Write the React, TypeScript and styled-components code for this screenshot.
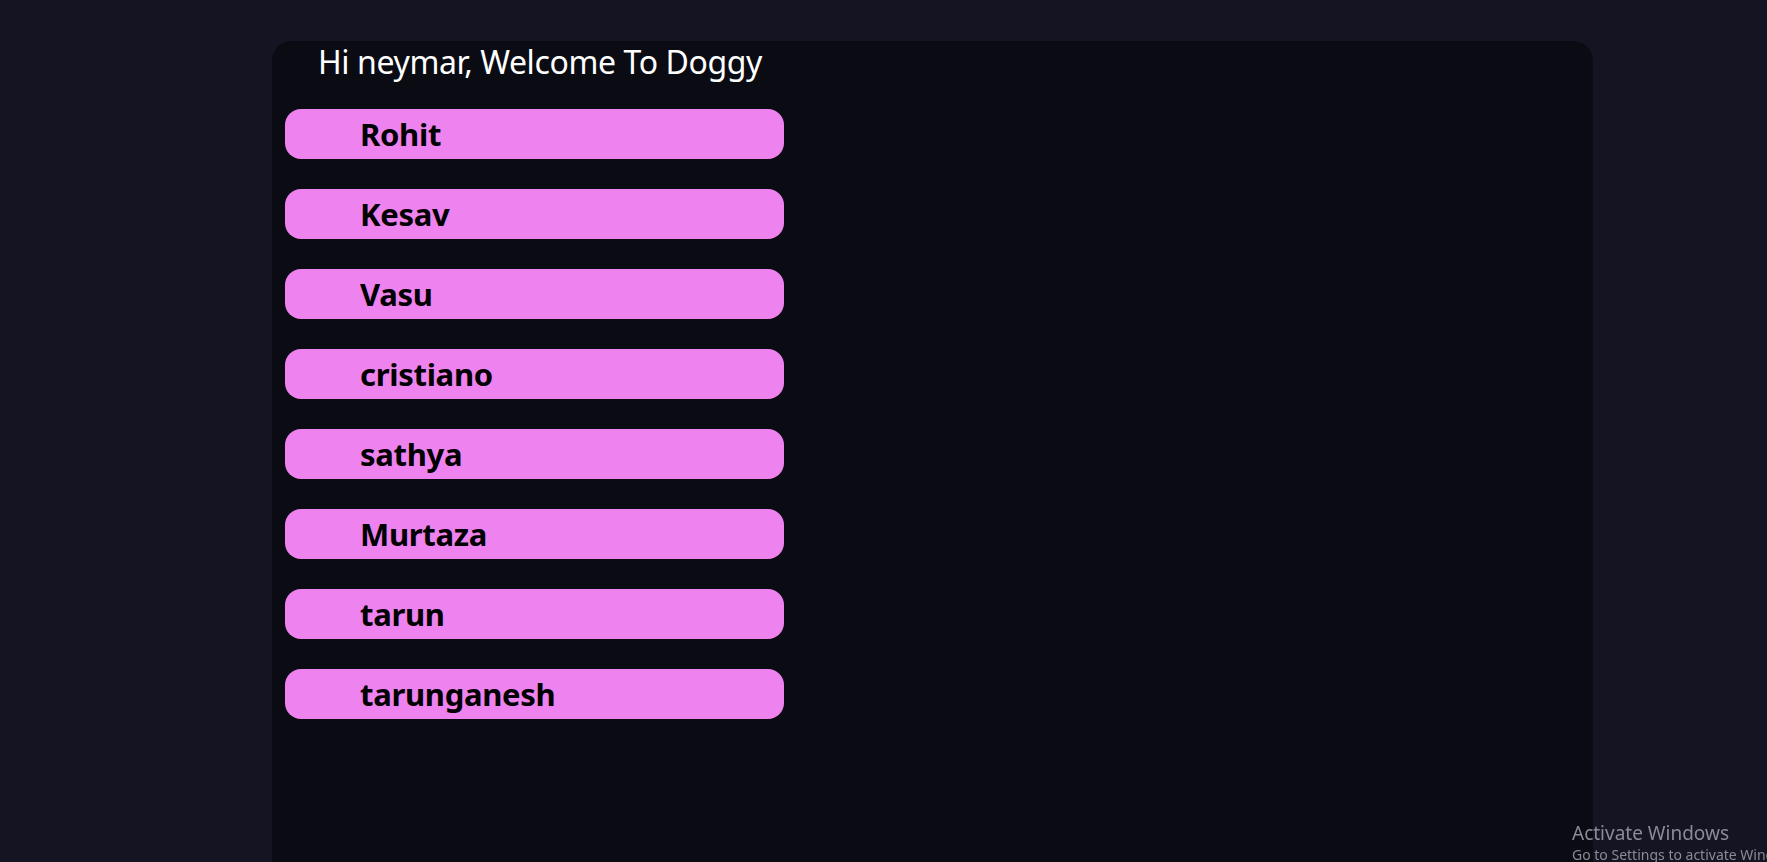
import React from "react";
import styled, { createGlobalStyle } from "styled-components";

const Global = createGlobalStyle`
  html, body { margin: 0; padding: 0; background: #141423; height: 100%; overflow: hidden; }
  body { font-family: "Noto Sans", "Open Sans", sans-serif; }
`;

const Page = styled.div`
  min-height: 862px;
  padding: 41px 0 0 272px;
  box-sizing: border-box;
`;

const Panel = styled.main`
  width: 1321px;
  height: 821px;
  background: #0a0b13;
  border-radius: 20px 20px 0 0;
  padding: 0 13px;
  box-sizing: border-box;
  display: flex;
  flex-direction: column;
`;

const Heading = styled.h1`
  margin: 0;
  padding: 6px 0 0 33px;
  height: 62px;
  font-size: 32px;
  font-weight: 400;
  line-height: 30px;
  color: #ffffff;
  letter-spacing: -0.4px;
`;

const List = styled.ul`
  list-style: none;
  margin: 0;
  padding: 0;
  display: flex;
  flex-direction: column;
  gap: 30px;
  width: 499px;
`;

const UserButton = styled.li`
  height: 50px;
  border-radius: 16px;
  background: #ee82ee;
  color: #000;
  display: flex;
  align-items: center;
  padding-left: 75px;
  font-size: 31px;
  font-weight: 700;
  letter-spacing: -0.3px;
`;

const Watermark = styled.div`
  position: fixed;
  left: 1572px;
  top: 822px;
  color: #8b8b96;
  font-family: "Noto Sans", sans-serif;
  white-space: nowrap;
  line-height: 1.25;
`;

const WmTitle = styled.div`
  font-size: 19px;
`;

const WmSub = styled.div`
  font-size: 14px;
`;

const users = ["Rohit", "Kesav", "Vasu", "cristiano", "sathya", "Murtaza", "tarun", "tarunganesh"];

export default function App() {
  return (
    <>
      <Global />
      <Page>
        <Panel>
          <Heading>Hi neymar, Welcome To Doggy</Heading>
          <List>
            {users.map((u) => (
              <UserButton key={u}>{u}</UserButton>
            ))}
          </List>
        </Panel>
      </Page>
      <Watermark>
        <WmTitle>Activate Windows</WmTitle>
        <WmSub>Go to Settings to activate Windows.</WmSub>
      </Watermark>
    </>
  );
}
